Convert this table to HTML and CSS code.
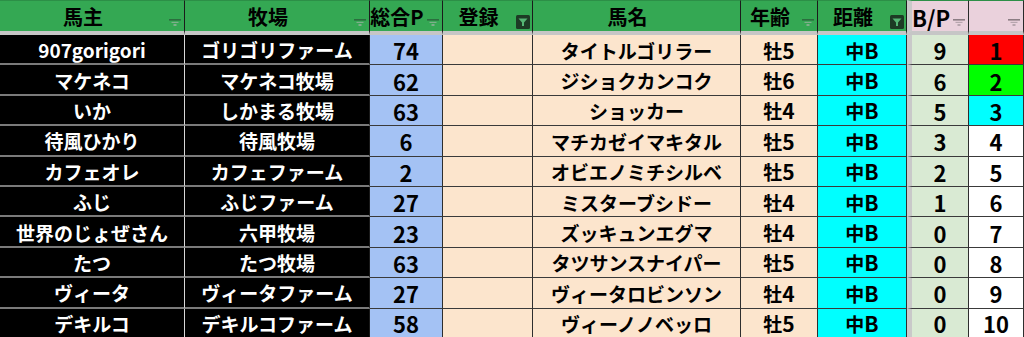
FILE: index.html
```html
<!DOCTYPE html>
<html lang="ja">
<head>
<meta charset="utf-8">
<link rel="stylesheet" href="styles.css">
</head>
<body>
<div class="sheet">
  <div class="hd c1">馬主<svg class="flt" viewBox="0 0 12 8"><rect x="0" y="0" width="12" height="1.6" fill="#2b6e3e"/><rect x="2.5" y="2.8" width="7" height="1.2" fill="#7fae8b"/><rect x="4.5" y="5" width="3" height="2" fill="#7fae8b"/></svg></div>
  <div class="hd c2">牧場<svg class="flt" viewBox="0 0 12 8"><rect x="0" y="0" width="12" height="1.6" fill="#2b6e3e"/><rect x="2.5" y="2.8" width="7" height="1.2" fill="#7fae8b"/><rect x="4.5" y="5" width="3" height="2" fill="#7fae8b"/></svg></div>
  <div class="hd c3">総合P<svg class="flt" viewBox="0 0 12 8"><rect x="0" y="0" width="12" height="1.6" fill="#2b6e3e"/><rect x="2.5" y="2.8" width="7" height="1.2" fill="#7fae8b"/><rect x="4.5" y="5" width="3" height="2" fill="#7fae8b"/></svg></div>
  <div class="hd c4">登録<svg class="btn" viewBox="0 0 14 14"><rect x="0" y="0" width="14" height="14" rx="1.5" fill="#1d3b25"/><path d="M2.5 3.5 H11.5 L8 7.5 V11 H6 V7.5 Z" fill="#55b574"/></svg></div>
  <div class="hd c5">馬名</div>
  <div class="hd c6">年齢<svg class="flt" viewBox="0 0 12 8"><rect x="0" y="0" width="12" height="1.6" fill="#2b6e3e"/><rect x="2.5" y="2.8" width="7" height="1.2" fill="#7fae8b"/><rect x="4.5" y="5" width="3" height="2" fill="#7fae8b"/></svg></div>
  <div class="hd c7">距離<svg class="btn" viewBox="0 0 14 14"><rect x="0" y="0" width="14" height="14" rx="1.5" fill="#1d3b25"/><path d="M2.5 3.5 H11.5 L8 7.5 V11 H6 V7.5 Z" fill="#55b574"/></svg></div>
  <div class="hd pk c8 bp">B/P<svg class="flt" viewBox="0 0 12 8"><rect x="0" y="0" width="12" height="1.6" fill="#8c7d84"/><rect x="2.5" y="2.8" width="7" height="1.2" fill="#b7a6ae"/><rect x="4.5" y="5" width="3" height="2" fill="#b7a6ae"/></svg></div>
  <div class="hd pk c9"><svg class="flt" viewBox="0 0 12 8"><rect x="0" y="0" width="12" height="1.6" fill="#8c7d84"/><rect x="2.5" y="2.8" width="7" height="1.2" fill="#b7a6ae"/><rect x="4.5" y="5" width="3" height="2" fill="#b7a6ae"/></svg></div>

  <div class="cl bk c1">907gorigori</div><div class="cl bk c2">ゴリゴリファーム</div><div class="cl bl">74</div><div class="cl pc"></div><div class="cl pc">タイトルゴリラー</div><div class="cl pc">牡<span class="n">5</span></div><div class="cl cy">中<span class="n">B</span></div><div class="cl lg c8">9</div><div class="cl rk red">1</div>
  <div class="cl bk c1">マケネコ</div><div class="cl bk c2">マケネコ牧場</div><div class="cl bl">62</div><div class="cl pc"></div><div class="cl pc">ジショクカンコク</div><div class="cl pc">牡<span class="n">6</span></div><div class="cl cy">中<span class="n">B</span></div><div class="cl lg c8">6</div><div class="cl rk grn">2</div>
  <div class="cl bk c1">いか</div><div class="cl bk c2">しかまる牧場</div><div class="cl bl">63</div><div class="cl pc"></div><div class="cl pc">ショッカー</div><div class="cl pc">牡<span class="n">4</span></div><div class="cl cy">中<span class="n">B</span></div><div class="cl lg c8">5</div><div class="cl rk cyn">3</div>
  <div class="cl bk c1">待風ひかり</div><div class="cl bk c2">待風牧場</div><div class="cl bl">6</div><div class="cl pc"></div><div class="cl pc">マチカゼイマキタル</div><div class="cl pc">牡<span class="n">5</span></div><div class="cl cy">中<span class="n">B</span></div><div class="cl lg c8">3</div><div class="cl rk">4</div>
  <div class="cl bk c1">カフェオレ</div><div class="cl bk c2">カフェファーム</div><div class="cl bl">2</div><div class="cl pc"></div><div class="cl pc">オビエノミチシルベ</div><div class="cl pc">牡<span class="n">5</span></div><div class="cl cy">中<span class="n">B</span></div><div class="cl lg c8">2</div><div class="cl rk">5</div>
  <div class="cl bk c1">ふじ</div><div class="cl bk c2">ふじファーム</div><div class="cl bl">27</div><div class="cl pc"></div><div class="cl pc">ミスターブシドー</div><div class="cl pc">牡<span class="n">4</span></div><div class="cl cy">中<span class="n">B</span></div><div class="cl lg c8">1</div><div class="cl rk">6</div>
  <div class="cl bk c1">世界のじょぜさん</div><div class="cl bk c2">六甲牧場</div><div class="cl bl">23</div><div class="cl pc"></div><div class="cl pc">ズッキュンエグマ</div><div class="cl pc">牡<span class="n">4</span></div><div class="cl cy">中<span class="n">B</span></div><div class="cl lg c8">0</div><div class="cl rk">7</div>
  <div class="cl bk c1">たつ</div><div class="cl bk c2">たつ牧場</div><div class="cl bl">63</div><div class="cl pc"></div><div class="cl pc">タツサンスナイパー</div><div class="cl pc">牡<span class="n">5</span></div><div class="cl cy">中<span class="n">B</span></div><div class="cl lg c8">0</div><div class="cl rk">8</div>
  <div class="cl bk c1">ヴィータ</div><div class="cl bk c2">ヴィータファーム</div><div class="cl bl">27</div><div class="cl pc"></div><div class="cl pc">ヴィータロビンソン</div><div class="cl pc">牡<span class="n">4</span></div><div class="cl cy">中<span class="n">B</span></div><div class="cl lg c8">0</div><div class="cl rk">9</div>
  <div class="cl bk c1 last">デキルコ</div><div class="cl bk c2 last">デキルコファーム</div><div class="cl bl last">58</div><div class="cl pc last"></div><div class="cl pc last">ヴィーノノベッロ</div><div class="cl pc last">牡<span class="n">5</span></div><div class="cl cy last">中<span class="n">B</span></div><div class="cl lg c8 last">0</div><div class="cl rk last">10</div>
</div>
</body>
</html>
```
FILE: styles.css
```css
html, body {
  margin: 0;
  padding: 0;
  background: #ffffff;
}
.sheet {
  display: grid;
  grid-template-columns: 185px 185px 73px 90px 208px 77px 89px 62px 55px;
  grid-template-rows: 35px repeat(9, 30.4px) 1fr;
  width: 1024px;
  height: 337px;
  overflow: hidden;
  font-family: "Noto Sans CJK JP", "Noto Sans", sans-serif;
  font-weight: 700;
  font-size: 19px;
  color: #000;
}
.hd {
  position: relative;
  box-sizing: border-box;
  background: #34a853;
  border-top: 1px solid #2c8f47;
  border-right: 1px solid #1b1b1b;
  border-bottom: 4px solid #c6c6c6;
  display: flex;
  align-items: center;
  justify-content: center;
  padding: 1px 18px 0 0;
  font-size: 20px;
  line-height: 1;
  white-space: nowrap;
}
.hd.pk {
  background: #ead1dc;
  border-right-color: #2a2a2a;
}
.hd.bp {
  font-size: 22px;
}
.hd.c8, .cl.c8 {
  border-left: 5px solid #c9c9c9;
}
.flt {
  position: absolute;
  right: 3px;
  top: 18px;
  width: 12px;
  height: 8px;
}
.btn {
  position: absolute;
  right: 2px;
  top: 14px;
  width: 14px;
  height: 14px;
}
.cl {
  box-sizing: border-box;
  display: flex;
  align-items: center;
  justify-content: center;
  border-right: 1px solid #2e2e2e;
  border-bottom: 1px solid #3a3a3a;
  line-height: 1;
  white-space: nowrap;
  padding-top: 1px;
}
.cl.last {
  border-bottom: 0;
}
.cl .n {
  font-size: 21px;
}
.bk {
  background: #000;
  color: #fff;
  border-bottom: 2px solid #7a7a7a;
}
.bk.c1 {
  border-right: 1px solid #d8d8d8;
}
.bk.c2 {
  border-right: 1px solid #1a1a1a;
}
.bl, .lg, .rk {
  font-size: 22px;
}
.bl { background: #a4c2f4; }
.pc { background: #fce5cd; }
.cy { background: #00ffff; }
.lg { background: #d9ead3; }
.rk { background: #ffffff; }
.rk.red { background: #ff0000; }
.rk.grn { background: #00ff00; }
.rk.cyn { background: #00ffff; }
```
